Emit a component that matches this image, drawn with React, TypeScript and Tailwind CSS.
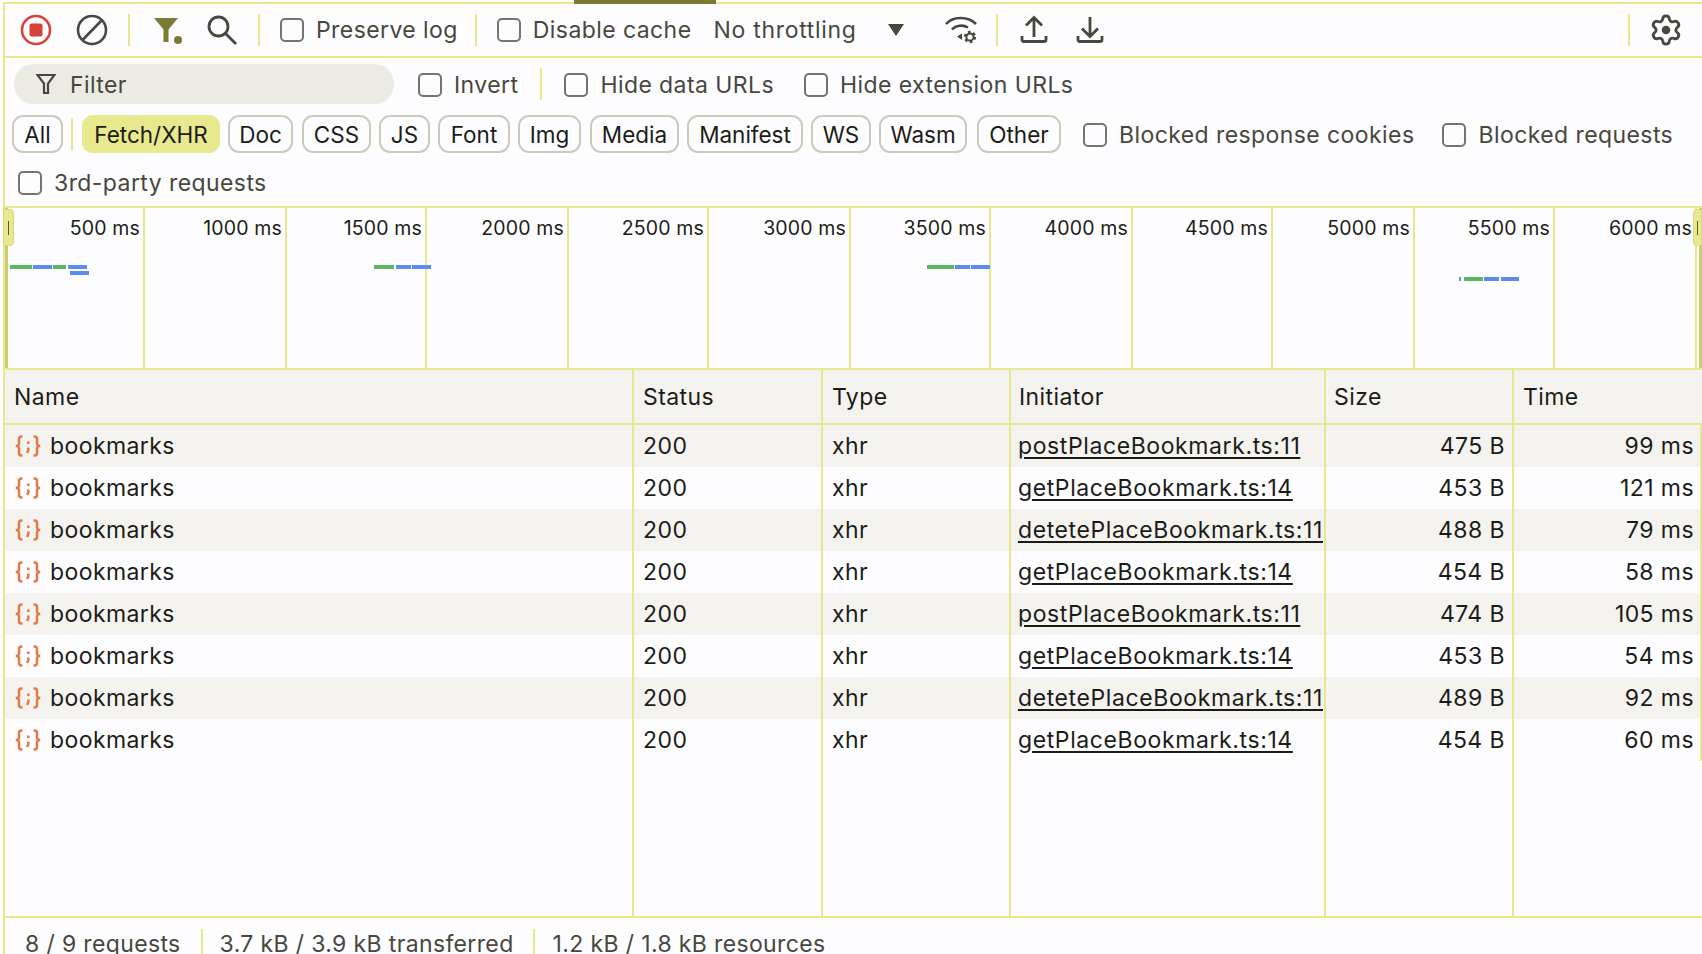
import React from "react";

const line = "bg-[#e8e88e]";

const Divider = ({ className = "" }: { className?: string }) => (
  <div className={`w-[2px] h-[32px] shrink-0 ${line} ${className}`} />
);

const Check = ({ label, className = "" }: { label: string; className?: string }) => (
  <label className={`flex items-center shrink-0 ${className}`}>
    <span className="w-[24px] h-[24px] shrink-0 rounded-[5px] border-2 border-[#75756d] bg-[#fdfcff]" />
    <span className="ml-[12px] whitespace-nowrap text-[#47473d]">{label}</span>
  </label>
);

const XhrIcon = () => (
  <svg width="28" height="26" viewBox="0 0 28 26" fill="none" stroke="#e27a45" strokeWidth="2.5" className="shrink-0">
    <path d="M8.500 3.500H7.500A2.500 2.500 0 0 0 5 6v4.500A2.500 2.500 0 0 1 2 13a2.500 2.500 0 0 1 3 2.500V20a2.500 2.500 0 0 0 2.500 2.500h1" />
    <path d="M19.500 3.500h1A2.500 2.500 0 0 1 23 6v4.500A2.500 2.500 0 0 0 26 13a2.500 2.500 0 0 0-3 2.500V20a2.500 2.500 0 0 1-2.500 2.500h-1" />
    <path d="M14.300 8.500v2.600M14.300 14.500v3L13 19.800" />
  </svg>
);

const filters = [
  ["All", "w-[51px]"],
  ["Fetch/XHR", "w-[138px] ml-[20px]"],
  ["Doc", "w-[65px] ml-[8px]"],
  ["CSS", "w-[69px] ml-[9px]"],
  ["JS", "w-[51px] ml-[8px]"],
  ["Font", "w-[72px] ml-[8px]"],
  ["Img", "w-[63px] ml-[8px]"],
  ["Media", "w-[89px] ml-[9px]"],
  ["Manifest", "w-[116px] ml-[8px]"],
  ["WS", "w-[60px] ml-[8px]"],
  ["Wasm", "w-[88px] ml-[8px]"],
  ["Other", "w-[84px] ml-[10px]"],
];

const ticks = ["500", "1000", "1500", "2000", "2500", "3000", "3500", "4000", "4500", "5000", "5500", "6000"];

const bars = [
  [10, 265, 22, "#5cb85f"],
  [33, 265, 19, "#5b8def"],
  [53, 265, 13, "#5cb85f"],
  [68, 265, 19, "#5b8def"],
  [70, 271, 19, "#5b8def"],
  [374, 265, 20, "#5cb85f"],
  [396, 265, 15, "#5b8def"],
  [412, 265, 19, "#5b8def"],
  [927, 265, 27, "#5cb85f"],
  [955, 265, 15, "#5b8def"],
  [971, 265, 19, "#5b8def"],
  [1459, 277, 2, "#5a9fb0"],
  [1464, 277, 19, "#5cb85f"],
  [1484, 277, 15, "#5b8def"],
  [1501, 277, 18, "#5b8def"],
] as const;

const rows = [
  ["postPlaceBookmark.ts:11", "475 B", "99 ms"],
  ["getPlaceBookmark.ts:14", "453 B", "121 ms"],
  ["detetePlaceBookmark.ts:11", "488 B", "79 ms"],
  ["getPlaceBookmark.ts:14", "454 B", "58 ms"],
  ["postPlaceBookmark.ts:11", "474 B", "105 ms"],
  ["getPlaceBookmark.ts:14", "453 B", "54 ms"],
  ["detetePlaceBookmark.ts:11", "489 B", "92 ms"],
  ["getPlaceBookmark.ts:14", "454 B", "60 ms"],
];

const cols = "grid grid-cols-[629px_189px_188px_315px_188px_1fr]";
const cell = "border-r-2 border-[#e8e88e] px-[9px] flex items-center whitespace-nowrap overflow-hidden";

export default function App() {
  return (
    <div
      className="w-[1702px] h-[954px] overflow-hidden relative flex flex-col bg-[#fdfcff] text-[23px] tracking-[0.42px] text-[#1c1c17]"
      style={{ fontFamily: "Inter, 'Noto Sans', sans-serif" }}
    >
      <div className="absolute left-[574px] top-0 w-[142px] h-[4px] bg-[#7b7b34]" />

      <div className="mt-[2px] ml-[3px] flex-1 flex flex-col min-h-0 border-l-2 border-t-2 border-[#e8e88e]">
        {/* top toolbar */}
        <div className="h-[54px] shrink-0 flex items-center border-b-2 border-[#e8e88e] text-[#47473d]">
          <svg width="32" height="32" viewBox="0 0 32 32" fill="none" className="ml-[15px] shrink-0">
            <circle cx="16" cy="16" r="14" stroke="#d4443a" strokeWidth="2.6" />
            <rect x="9.500" y="9.500" width="13" height="13" rx="2" fill="#d4443a" />
          </svg>
          <svg width="32" height="32" viewBox="0 0 32 32" fill="none" stroke="#47473d" strokeWidth="2.6" className="ml-[24px] shrink-0">
            <circle cx="16" cy="16" r="14" />
            <path d="M6.500 26 26 6" />
          </svg>
          <Divider className="ml-[20px]" />
          <svg width="32" height="32" viewBox="0 0 32 32" className="ml-[22px] shrink-0">
            <path d="M2 4h24l-9.500 11.500V28h-5V15.500z" fill="#7b7b34" />
            <circle cx="26" cy="26" r="4" fill="#7b7b34" />
          </svg>
          <svg width="32" height="32" viewBox="0 0 32 32" fill="none" stroke="#47473d" strokeWidth="2.8" className="ml-[22px] shrink-0">
            <circle cx="12.500" cy="12.500" r="9.500" />
            <path d="m19 19 11 11" />
          </svg>
          <Divider className="ml-[20px]" />
          <Check label="Preserve log" className="ml-[20px]" />
          <Divider className="ml-[17px]" />
          <Check label="Disable cache" className="ml-[20px]" />
          <span className="ml-[22px] whitespace-nowrap tracking-[0.7px]">No throttling</span>
          <svg width="16" height="12" viewBox="0 0 16 12" className="ml-[31px] shrink-0">
            <path d="M0 0h16L8 12z" fill="#47473d" />
          </svg>
          <svg width="34" height="30" viewBox="0 0 34 30" fill="none" stroke="#47473d" strokeWidth="2.6" className="ml-[40px] shrink-0">
            <path d="M2 9C9 1 24 1 32 9" />
            <path d="M8 14.500c4-4.500 11-5 16-2" />
            <path d="m18 18.500-5 3 5 3.500z" fill="#47473d" stroke="none" />
            <circle cx="26" cy="22" r="5" strokeWidth="2.400" strokeDasharray="2.600 2.630" />
            <circle cx="26" cy="22" r="3.600" strokeWidth="2" />
          </svg>
          <Divider className="ml-[18px]" />
          <svg width="28" height="30" viewBox="0 0 28 30" fill="none" stroke="#47473d" strokeWidth="2.8" className="ml-[22px] shrink-0">
            <path d="M14 22V3M6 10.500 14 2.500l8 8M2 21v3.500a2 2 0 0 0 2 2h20a2 2 0 0 0 2-2V21" />
          </svg>
          <svg width="28" height="30" viewBox="0 0 28 30" fill="none" stroke="#47473d" strokeWidth="2.8" className="ml-[28px] shrink-0">
            <path d="M14 2v19M6 13.500l8 8 8-8M2 21v3.500a2 2 0 0 0 2 2h20a2 2 0 0 0 2-2V21" />
          </svg>
          <Divider className="ml-[524px]" />
          <svg width="34" height="34" viewBox="0 0 24 24" fill="none" stroke="#47473d" strokeWidth="2" strokeLinecap="round" strokeLinejoin="round" className="ml-[19px] shrink-0">
            <path d="M9.671 4.136a2.34 2.34 0 0 1 4.659 0 2.34 2.34 0 0 0 3.319 1.915 2.34 2.34 0 0 1 2.33 4.033 2.34 2.34 0 0 0 0 3.831 2.34 2.34 0 0 1-2.33 4.033 2.34 2.34 0 0 0-3.319 1.915 2.34 2.34 0 0 1-4.659 0 2.34 2.34 0 0 0-3.32-1.915 2.34 2.34 0 0 1-2.33-4.033 2.34 2.34 0 0 0 0-3.831A2.34 2.34 0 0 1 6.35 6.051a2.34 2.34 0 0 0 3.319-1.915" />
            <circle cx="12" cy="12" r="3" fill="#47473d" stroke="none" />
          </svg>
        </div>

        {/* filter text row */}
        <div className="h-[52px] shrink-0 flex items-center">
          <div className="ml-[9px] w-[380px] h-[40px] rounded-full bg-[#ecebe4] flex items-center text-[#47473d] shrink-0">
            <svg width="20" height="22" viewBox="0 0 20 22" fill="none" stroke="#47473d" strokeWidth="2.2" className="ml-[22px]">
              <path d="M1.500 2h17l-6.500 8.500V20H8v-9.500z" />
            </svg>
            <span className="ml-[14px] pt-[2px]">Filter</span>
          </div>
          <Check label="Invert" className="ml-[24px] pt-[2px]" />
          <Divider className="ml-[22px]" />
          <Check label="Hide data URLs" className="ml-[22px] pt-[2px]" />
          <Check label="Hide extension URLs" className="ml-[30px] pt-[2px]" />
        </div>

        {/* resource type row */}
        <div className="h-[48px] shrink-0 flex items-center">
          {filters.map(([name, cls], i) => (
            <React.Fragment key={name}>
              <button
                className={`${cls} h-[38px] shrink-0 rounded-[11px] text-center text-[22.500px] tracking-[0px] pt-[1px] ${
                  name === "Fetch/XHR" ? "bg-[#e8e88e]" : "border-2 border-[#cbcbbb]"
                } ${i === 0 ? "ml-[7px]" : ""}`}
              >
                {name}
              </button>
              {i === 0 && <div className="w-[2px] h-[32px] -mr-[11px] ml-[8px] shrink-0 bg-[#e8e88e]" />}
            </React.Fragment>
          ))}
          <Check label="Blocked response cookies" className="ml-[22px] pt-[2px]" />
          <Check label="Blocked requests" className="ml-[28px] pt-[2px]" />
        </div>

        <div className="h-[48px] shrink-0 flex items-center pt-[2px]">
          <Check label="3rd-party requests" className="ml-[13px]" />
        </div>

        {/* overview */}
        <div className="h-[162px] shrink-0 flex border-t-2 border-[#e8e88e] text-[19.500px] tracking-[0.15px] relative">
          {ticks.map((t, i) => (
            <div
              key={t}
              className={`${i % 2 === 0 ? "w-[140px]" : "w-[142px]"} shrink-0 border-r-2 border-[#e8e88e] text-right pr-[3px] pt-[8px] leading-[24px] whitespace-nowrap last:border-r-0`}
            >
              {t} ms
            </div>
          ))}
          {bars.map(([x, y, w, c]) => (
            <div
              key={`${x}-${y}`}
              className="absolute h-[4px]"
              style={{ left: x - 5, top: y - 208, width: w, background: c }}
            />
          ))}
          <div className="absolute left-0 top-0 h-full w-[3px] bg-[#cdcd70]" />
          <div className="absolute -left-[2px] top-[1px] w-[11px] h-[37px] rounded-r-[4px] bg-[#e8e88e] border border-[#d8d87c] flex items-center justify-center">
            <div className="w-[1px] h-[14px] bg-[#5b5b20]" />
          </div>
          <div className="absolute right-0 top-0 h-full w-[3px] bg-[#cdcd70]" />
          <div className="absolute right-0 top-[1px] w-[9px] h-[37px] rounded-l-[4px] bg-[#e8e88e] border border-[#d8d87c] flex items-center justify-center">
            <div className="w-[1px] h-[14px] bg-[#5b5b20]" />
          </div>
        </div>

        {/* table */}
        <div className={`${cols} h-[57px] shrink-0 bg-[#f4f3f0] border-y-2 border-[#e8e88e]`}>
          {["Name", "Status", "Type", "Initiator", "Size", "Time"].map((h) => (
            <div key={h} className={`${cell} pt-[1px] last:border-r-0 nth-[4]:pl-[8px] nth-[5]:pl-[8px]`}>{h}</div>
          ))}
        </div>
        {rows.map(([init, size, time], i) => (
          <div key={i} className={`${cols} h-[42px] shrink-0 ${i % 2 === 0 ? "bg-[#f4f3f0]" : "bg-[#fdfcff]"}`}>
            <div className={cell}>
              <XhrIcon />
              <span className="ml-[8px]">bookmarks</span>
            </div>
            <div className={cell}>200</div>
            <div className={cell}>xhr</div>
            <div className={`${cell} underline underline-offset-[3px] decoration-2 tracking-[0.6px] !pl-[7px] !pr-0`}>{init}</div>
            <div className={`${cell} justify-end !pr-[7px]`}>{size}</div>
            <div className={`${cell} justify-end border-r-0 !pr-[6px]`}>{time}</div>
          </div>
        ))}
        <div className={`${cols} flex-1 min-h-0`}>
          <div className={cell} />
          <div className={cell} />
          <div className={cell} />
          <div className={cell} />
          <div className={cell} />
          <div />
        </div>

        {/* status bar */}
        <div className="h-[38px] shrink-0 border-t-2 border-[#e8e88e] flex items-start pt-[11px] text-[#47473d] whitespace-nowrap tracking-[0.36px]">
          <span className="ml-[20px] leading-[30px]">8 / 9 requests</span>
          <div className={`w-[2px] h-[30px] ml-[20px] ${line}`} />
          <span className="ml-[17px] leading-[30px]">3.7 kB / 3.9 kB transferred</span>
          <div className={`w-[2px] h-[30px] ml-[19px] ${line}`} />
          <span className="ml-[18px] leading-[30px]">1.2 kB / 1.8 kB resources</span>
        </div>
      </div>
    </div>
  );
}
